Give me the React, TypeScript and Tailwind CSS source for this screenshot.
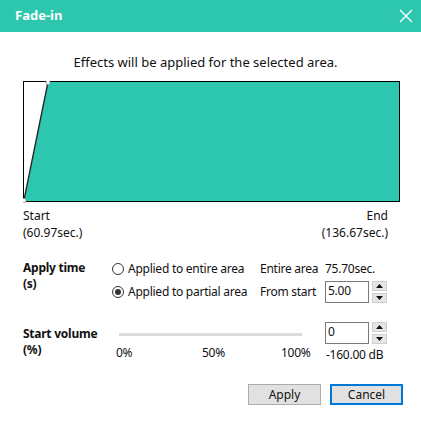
import React from "react";

const font = { fontFamily: '"Noto Sans", "Open Sans", sans-serif' };

function Radio({ checked }: { checked?: boolean }) {
  return (
    <span className="w-[12px] h-[12px] rounded-full border border-[#333] bg-white flex items-center justify-center shrink-0">
      {checked && <span className="w-[6px] h-[6px] rounded-full bg-[#333]" />}
    </span>
  );
}

function Spinner() {
  return (
    <div className="flex flex-col gap-[2px] ml-[3px]">
      <div className="w-[15px] h-[10px] bg-[#e5e5e5] border border-[#cfcfcf] flex items-center justify-center">
        <svg width="7" height="4" viewBox="0 0 7 4"><polygon points="0,4 3.5,0 7,4" fill="#111" /></svg>
      </div>
      <div className="w-[15px] h-[10px] bg-[#e5e5e5] border border-[#cfcfcf] flex items-center justify-center">
        <svg width="7" height="4" viewBox="0 0 7 4"><polygon points="0,0 3.5,4 7,0" fill="#111" /></svg>
      </div>
    </div>
  );
}

function NumInput({ value }: { value: string }) {
  return (
    <div className="flex items-center">
      <div className="w-[44px] h-[22px] border border-[#7a7a7a] bg-white pl-[2px] leading-[18px] text-[12px] text-[#111]">
        {value}
      </div>
      <Spinner />
    </div>
  );
}

export default function App() {
  return (
    <div className="w-[421px] h-[424px] bg-white text-[12px] text-[#111] overflow-hidden" style={font}>
      <div className="h-[32px] bg-[#2dc7af] flex items-center justify-between pl-[15px] pr-[8px]">
        <span className="text-white font-bold text-[13px]">Fade-in</span>
        <svg width="14" height="14" viewBox="0 0 14 14">
          <path d="M1 1 L13 13 M13 1 L1 13" stroke="white" strokeWidth="1.4" />
        </svg>
      </div>

      <div className="pt-[21px] pr-[10px] leading-[18px] text-center text-[13px]">
        Effects will be applied for the selected area.
      </div>

      <div className="mt-[10px] ml-[23px]">
        <svg width="377" height="122" viewBox="0 0 377 122" className="block">
          <polygon points="1,120.5 25,0.5 376,0.5 376,120.5" fill="#2dc7af" />
          <rect x="0.5" y="0.5" width="376" height="120" fill="none" stroke="#000" strokeWidth="1" />
          <line x1="0.8" y1="120" x2="25" y2="1" stroke="#222" strokeWidth="1.3" />
          <circle cx="25" cy="1.5" r="2" fill="white" stroke="#999" strokeWidth="0.8" />
          <circle cx="1" cy="119.5" r="2" fill="white" stroke="#999" strokeWidth="0.8" />
        </svg>
      </div>

      <div className="flex justify-between pl-[23px] pr-[33px] mt-[4px] leading-[17px]">
        <div>
          <div>Start</div>
          <div>(60.97sec.)</div>
        </div>
        <div className="text-right">
          <div>End</div>
          <div>(136.67sec.)</div>
        </div>
      </div>

      <div className="flex mt-[15px] pl-[23px] tracking-[-0.25px]">
        <div className="w-[89px] pt-[4px] leading-[16px] font-bold">
          <div>Apply time</div>
          <div>(s)</div>
        </div>
        <div className="flex flex-col">
          <div className="h-[25px] flex items-center">
            <div className="w-[148px] flex items-center gap-[4px]">
              <Radio />
              <span>Applied to entire area</span>
            </div>
            <span className="w-[65px]">Entire area</span>
            <span>75.70sec.</span>
          </div>
          <div className="h-[22px] flex items-center">
            <div className="w-[148px] flex items-center gap-[4px]">
              <Radio checked />
              <span>Applied to partial area</span>
            </div>
            <span className="w-[65px]">From start</span>
            <NumInput value="5.00" />
          </div>
        </div>
      </div>

      <div className="flex mt-[19px] pl-[23px] tracking-[-0.25px]">
        <div className="w-[89px] pt-[4px] leading-[16px] font-bold">
          <div>Start volume</div>
          <div>(%)</div>
        </div>
        <div className="w-[213px]">
          <div className="h-[22px] pt-[11px]">
            <div className="ml-[7px] w-[183px] h-[3px] bg-[#dcdcdc]" />
          </div>
          <div className="flex ml-[4px] leading-[16px] mt-[1px]">
            <span className="w-[86px]">0%</span>
            <span className="w-[79px]">50%</span>
            <span>100%</span>
          </div>
        </div>
        <div className="flex flex-col">
          <NumInput value="0" />
          <div className="mt-[3px] leading-[16px] pl-[1px]">-160.00 dB</div>
        </div>
      </div>

      <div className="flex justify-end gap-[9px] pr-[18px] mt-[21px]">
        <button className="w-[73px] h-[21px] bg-[#e1e1e1] border border-[#adadad] text-[12px] leading-[19px]">Apply</button>
        <button className="w-[73px] h-[21px] bg-[#e1e1e1] border-2 border-[#0078d7] text-[12px] leading-[17px]">Cancel</button>
      </div>
    </div>
  );
}
